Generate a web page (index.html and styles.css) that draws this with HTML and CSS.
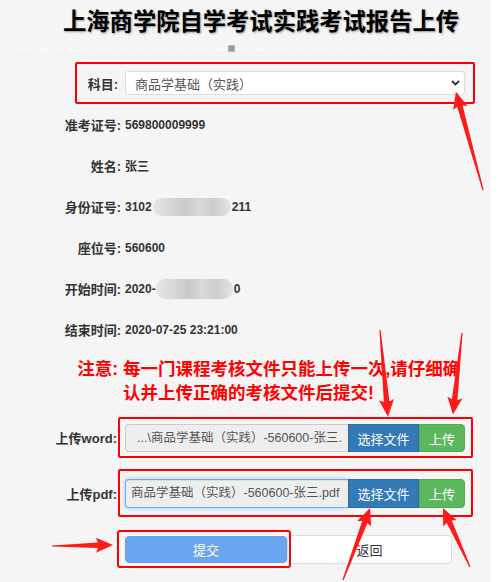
FILE: index.html
```html
<!DOCTYPE html>
<html lang="zh-CN">
<head>
<meta charset="utf-8">
<title>上海商学院自学考试实践考试报告上传</title>
<link rel="stylesheet" href="styles.css">
</head>
<body>
<div class="page">
  <h1 class="title">上海商学院自学考试实践考试报告上传</h1>
  <div class="divider"></div>
  <div class="marker"></div>

  <div class="subject-box">
    <span class="subject-label">科目:</span>
    <div class="select">
      <span>商品学基础（实践）</span>
      <svg class="chev" width="9" height="6" viewBox="0 0 9 6"><polyline points="1,1 4.5,4.5 8,1" fill="none" stroke="#333" stroke-width="1.8"/></svg>
    </div>
  </div>

  <dl class="info">
    <div class="row"><dt>准考证号:</dt><dd>569800009999</dd></div>
    <div class="row"><dt>姓名:</dt><dd>张三</dd></div>
    <div class="row"><dt>身份证号:</dt><dd>3102<span class="blur blur-id"></span>211</dd></div>
    <div class="row"><dt>座位号:</dt><dd>560600</dd></div>
    <div class="row"><dt>开始时间:</dt><dd>2020-<span class="blur blur-time"></span>0</dd></div>
    <div class="row"><dt>结束时间:</dt><dd>2020-07-25 23:21:00</dd></div>
  </dl>

  <div class="notice">
    <span class="notice-label">注意:</span>
    <p class="notice-text">每一门课程考核文件只能上传一次,请仔细确<br>认并上传正确的考核文件后提交!</p>
  </div>

  <div class="upload-row">
    <span class="upload-label">上传word:</span>
    <div class="upload-box">
      <div class="file-input word">...\商品学基础（实践）-560600-张三.</div>
      <button class="btn btn-choose">选择文件</button>
      <button class="btn btn-upload">上传</button>
    </div>
  </div>

  <div class="upload-row pdf-row">
    <span class="upload-label">上传pdf:</span>
    <div class="upload-box pdf-box">
      <div class="file-input pdf">商品学基础（实践）-560600-张三.pdf</div>
      <button class="btn btn-choose">选择文件</button>
      <button class="btn btn-upload">上传</button>
    </div>
  </div>

  <div class="actions">
    <span class="submit-wrap"><button class="btn-submit">提交</button></span>
    <button class="btn-back">返回</button>
  </div>

  <svg class="arrows" width="500" height="582" viewBox="0 0 500 582">
    <g fill="#ff1a1a">
      <polygon transform="translate(483,190) rotate(-105.4)" points="0,-0.6 87,-2.8 85,-7.5 102,0 85,7.5 87,2.8 0,0.6"/>
      <polygon transform="translate(380,330) rotate(84.7)" points="0,-0.6 72,-2.8 70,-7.5 87,0 70,7.5 72,2.8 0,0.6"/>
      <polygon transform="translate(462,333) rotate(96.3)" points="0,-0.6 67,-2.8 65,-7.5 82,0 65,7.5 67,2.8 0,0.6"/>
      <polygon transform="translate(343,580) rotate(-69.4)" points="0,-0.6 62,-2.8 60,-7.5 77,0 60,7.5 62,2.8 0,0.6"/>
      <polygon transform="translate(470,567) rotate(-114.6)" points="0,-0.6 50,-2.8 48,-7.5 65,0 48,7.5 50,2.8 0,0.6"/>
      <polygon transform="translate(52,546) rotate(-0.9)" points="0,-0.6 46,-2.8 44,-7.5 61,0 44,7.5 46,2.8 0,0.6"/>
    </g>
  </svg>
</div>
</body>
</html>
```

FILE: styles.css
```css
* { box-sizing: border-box; }

html, body {
  margin: 0;
  padding: 0;
  background: #fff;
}

body {
  font-family: "Liberation Sans", "Noto Sans CJK SC", sans-serif;
  color: #333;
}

.page {
  position: relative;
  width: 491px;
  height: 582px;
  background: #f5f5f5;
  overflow: hidden;
}

.title {
  margin: 0;
  padding: 10px 0 0 63px;
  font-size: 23.3px;
  line-height: 24px;
  height: 34px;
  font-weight: 700;
  color: #000;
  text-shadow: 1px 1px 2px rgba(0, 0, 0, 0.4);
  white-space: nowrap;
}

.divider {
  margin: 15px 0 0 10px;
  width: 460px;
  border-top: 1px dashed rgba(255, 255, 255, 0.95);
}

.marker {
  width: 7px;
  height: 7px;
  margin: -5px 0 0 228px;
  background: #999;
  border: 1px solid #b5b5b5;
}

.subject-box {
  margin: 10px 0 0 75px;
  width: 400px;
  height: 42px;
  border: 2px solid #f00;
  border-radius: 2px;
  display: flex;
  align-items: center;
}

.subject-label {
  width: 41px;
  text-align: right;
  font-size: 13px;
  font-weight: 700;
  margin-right: 7px;
}

.select {
  width: 340px;
  height: 24px;
  background: #fff;
  border: 1px solid #dcdcdc;
  border-radius: 3px;
  display: flex;
  align-items: center;
  justify-content: space-between;
  padding: 0 4px 0 9px;
  font-size: 13px;
  color: #555;
}

.chev { display: block; }

.info { margin: 0; }

.row {
  display: flex;
  align-items: center;
  height: 41px;
}

.row dt {
  width: 121px;
  text-align: right;
  font-size: 13px;
  font-weight: 700;
}

.row dd {
  margin: 0 0 0 4px;
  font-size: 12px;
  font-weight: 700;
  display: flex;
  align-items: center;
}

.blur {
  display: inline-block;
  height: 18px;
  border-radius: 9px;
  background: linear-gradient(90deg, #e6e6e6 0, #d8d8d8 22%, #c9c9c9 42%, #d9d9d9 60%, #cdcdcd 78%, #e4e4e4 100%);
}

.blur-id { width: 78px; margin: 0 1px; }
.blur-time { width: 77px; height: 20px; margin: 0 1px 0 0; }

.notice {
  display: flex;
  margin-top: 7px;
  color: #f00;
  font-weight: 700;
  font-size: 17.5px;
  line-height: 24px;
}

.notice-label {
  width: 118px;
  text-align: right;
}

.notice-text {
  margin: 0 0 0 5px;
  white-space: nowrap;
}

.upload-row {
  display: flex;
  align-items: center;
  margin-top: 12px;
}

.pdf-row { margin-top: 11px; }

.upload-label {
  width: 117px;
  margin-right: 1px;
  text-align: right;
  font-size: 13px;
  font-weight: 700;
}

.upload-box {
  width: 355px;
  border: 2px solid #f00;
  border-radius: 2px;
  padding: 5px 6px 4px 5px;
  display: flex;
}

.pdf-box { padding: 8px 6px 7px 5px; }

.file-input {
  width: 223px;
  height: 28px;
  background: #eee;
  border: 1px solid #ccc;
  border-right: 0;
  border-radius: 4px 0 0 4px;
  font-size: 12.5px;
  color: #555;
  line-height: 26px;
  white-space: nowrap;
  overflow: hidden;
}

.file-input.word { padding-left: 11px; }

.file-input.pdf {
  height: 29px;
  line-height: 27px;
  padding-left: 5px;
  border: 1px solid #66afe9;
  border-right: 0;
  box-shadow: inset 0 1px 1px rgba(0, 0, 0, 0.075), 0 0 5px rgba(102, 175, 233, 0.6);
}

.btn {
  border: 0;
  padding: 0;
  color: #fff;
  font-size: 13px;
  font-family: inherit;
}

.btn-choose {
  width: 71px;
  background: #337ab7;
  border: 1px solid #2e6da4;
}

.btn-upload {
  width: 46px;
  background: #5cb85c;
  border: 1px solid #4cae4c;
  border-radius: 0 4px 4px 0;
}

.actions {
  display: flex;
  align-items: flex-start;
  margin: 13px 0 0 117px;
}

.submit-wrap {
  position: relative;
  z-index: 1;
  display: flex;
  border: 2px solid #f00;
  border-radius: 3px;
  padding: 4px 2px 3px 6px;
}

.btn-submit {
  width: 162px;
  height: 27px;
  padding: 0;
  background: #6aa5f0;
  border: 1px solid #64a0ec;
  border-radius: 4px;
  color: #fff;
  font-size: 13px;
  font-family: inherit;
}

.btn-back {
  width: 165px;
  height: 29px;
  margin: 5px 0 0 -4px;
  padding: 0;
  background: #fff;
  border: 1px solid #ddd;
  border-radius: 4px;
  color: #333;
  font-size: 13px;
  font-family: inherit;
}

.arrows {
  position: absolute;
  top: 0;
  left: 0;
  pointer-events: none;
}
```
